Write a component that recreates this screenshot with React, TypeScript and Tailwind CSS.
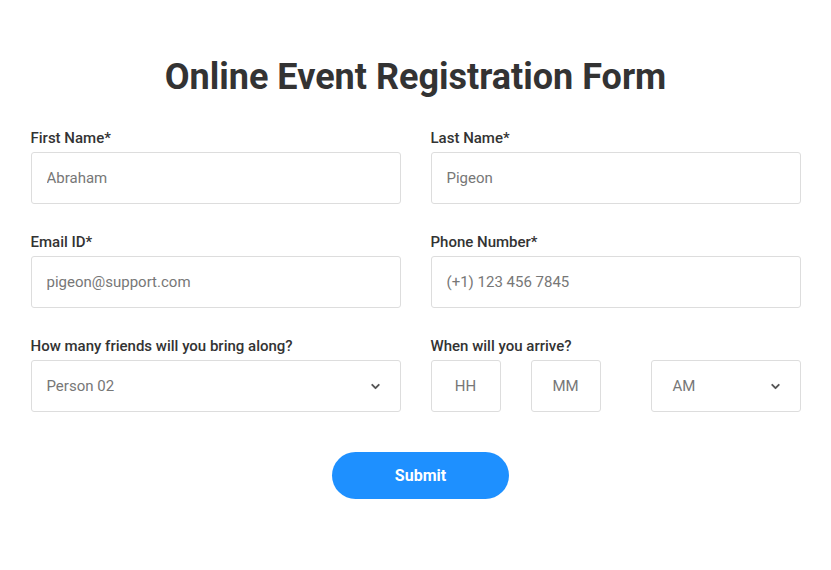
import { ChevronDown } from "lucide-react";

const inputCls =
  "h-[52px] w-full rounded-[3px] border border-[#dddddd] bg-white px-[15px] text-[15px] text-[#777777] outline-none placeholder:text-[#777777]";

const labelCls = "mb-[5px] text-[15px] font-medium leading-[18px] text-[#333333]";

function Field({ label, placeholder }: { label: string; placeholder: string }) {
  return (
    <div className="flex flex-col">
      <label className={labelCls}>{label}</label>
      <input className={inputCls} placeholder={placeholder} />
    </div>
  );
}

function SelectBox({ value, className }: { value: string; className: string }) {
  return (
    <div
      className={`flex h-[52px] items-center justify-between rounded-[3px] border border-[#dddddd] bg-white pr-[18px] text-[15px] text-[#777777] ${className}`}
    >
      <span>{value}</span>
      <ChevronDown size={13} strokeWidth={3.5} className="text-[#555555]" />
    </div>
  );
}

export default function App() {
  return (
    <div className="min-h-screen bg-white font-['Roboto',sans-serif]">
      <div className="mx-auto w-[770px] pt-[55px]">
        <h1 className="text-center text-[36px] font-bold leading-[44px] text-[#333333]">
          Online Event Registration Form
        </h1>
        <div className="mt-[30px] grid grid-cols-2 gap-x-[30px] gap-y-[29px]">
          <Field label="First Name*" placeholder="Abraham" />
          <Field label="Last Name*" placeholder="Pigeon" />
          <Field label="Email ID*" placeholder="pigeon@support.com" />
          <Field label="Phone Number*" placeholder="(+1) 123 456 7845" />
          <div className="flex flex-col">
            <label className={labelCls}>How many friends will you bring along?</label>
            <SelectBox value="Person 02" className="w-full pl-[15px]" />
          </div>
          <div className="flex flex-col">
            <label className={labelCls}>When will you arrive?</label>
            <div className="flex gap-[30px]">
              <input className={`${inputCls} !w-[70px] text-center`} placeholder="HH" />
              <input className={`${inputCls} !w-[70px] text-center`} placeholder="MM" />
              <SelectBox value="AM" className="ml-auto w-[150px] shrink-0 pl-[21px]" />
            </div>
          </div>
        </div>
        <div className="mt-[40px] flex justify-center pl-[10px]">
          <button className="h-[47px] w-[177px] rounded-full bg-[#1e90ff] text-[16px] font-bold text-white">
            Submit
          </button>
        </div>
      </div>
    </div>
  );
}
